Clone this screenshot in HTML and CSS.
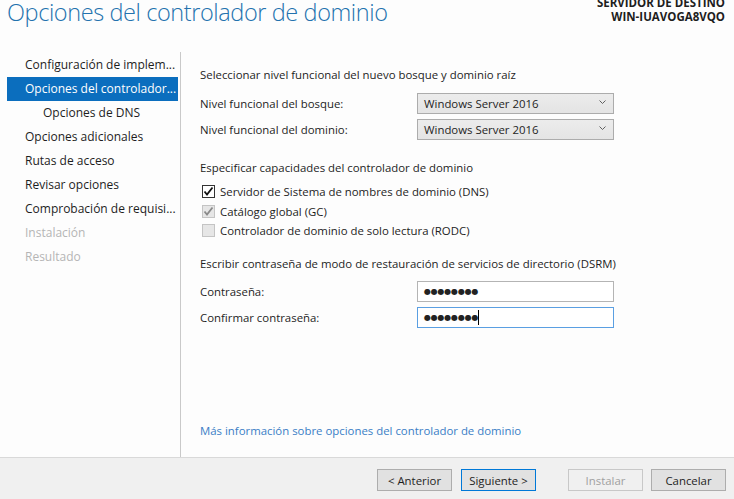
FILE: index.html
```html
<!DOCTYPE html>
<html lang="es">
<head>
<meta charset="utf-8">
<title>Opciones del controlador de dominio</title>
<link rel="stylesheet" href="styles.css">
</head>
<body>
<div class="page">
  <header class="header">
    <h1 class="title">Opciones del controlador de dominio</h1>
    <div class="server">
      <div>SERVIDOR DE DESTINO</div>
      <div>WIN-IUAVOGA8VQO</div>
    </div>
  </header>
  <div class="main">
    <nav class="sidebar">
      <ul class="steps">
        <li class="step">Configuración de implem...</li>
        <li class="step selected">Opciones del controlador...</li>
        <li class="step sub">Opciones de DNS</li>
        <li class="step">Opciones adicionales</li>
        <li class="step">Rutas de acceso</li>
        <li class="step">Revisar opciones</li>
        <li class="step">Comprobación de requisi...</li>
        <li class="step disabled">Instalación</li>
        <li class="step disabled">Resultado</li>
      </ul>
    </nav>
    <section class="content">
      <div class="heading h-first">Seleccionar nivel funcional del nuevo bosque y dominio raíz</div>
      <div class="field f-first">
        <span class="label">Nivel funcional del bosque:</span>
        <div class="select"><span>Windows Server 2016</span><svg class="chev" width="7" height="4" viewBox="0 0 7 4"><polyline points="0.5,0.5 3.5,3.5 6.5,0.5" fill="none" stroke="#606060" stroke-width="1"/></svg></div>
      </div>
      <div class="field">
        <span class="label">Nivel funcional del dominio:</span>
        <div class="select"><span>Windows Server 2016</span><svg class="chev" width="7" height="4" viewBox="0 0 7 4"><polyline points="0.5,0.5 3.5,3.5 6.5,0.5" fill="none" stroke="#606060" stroke-width="1"/></svg></div>
      </div>

      <div class="heading h-second">Especificar capacidades del controlador de dominio</div>
      <div class="checks">
        <div class="check">
          <span class="box"><svg width="11" height="11" viewBox="0 0 11 11"><polyline points="1.5,5.5 4,8.5 9.5,1.5" fill="none" stroke="#111" stroke-width="1.8"/></svg></span>
          <span>Servidor de Sistema de nombres de dominio (DNS)</span>
        </div>
        <div class="check">
          <span class="box box-disabled"><svg width="11" height="11" viewBox="0 0 11 11"><polyline points="1.5,5.5 4,8.5 9.5,1.5" fill="none" stroke="#8a8a8a" stroke-width="1.8"/></svg></span>
          <span>Catálogo global (GC)</span>
        </div>
        <div class="check">
          <span class="box box-disabled"></span>
          <span>Controlador de dominio de solo lectura (RODC)</span>
        </div>
      </div>

      <div class="heading h-third">Escribir contraseña de modo de restauración de servicios de directorio (DSRM)</div>
      <div class="field f-pass">
        <span class="label">Contraseña:</span>
        <div class="input"><span class="dots">●●●●●●●●</span></div>
      </div>
      <div class="field">
        <span class="label">Confirmar contraseña:</span>
        <div class="input focused"><span class="dots">●●●●●●●●</span><span class="caret"></span></div>
      </div>

      <a class="link" href="#">Más información sobre opciones del controlador de dominio</a>
    </section>
  </div>
  <footer class="footer">
    <button class="btn">&lt; Anterior</button>
    <button class="btn primary">Siguiente &gt;</button>
    <button class="btn off" disabled>Instalar</button>
    <button class="btn">Cancelar</button>
  </footer>
</div>
</body>
</html>
```

FILE: styles.css
```css
* { box-sizing: border-box; }
html, body { margin: 0; padding: 0; }
body {
  background: #fdfdfd;
  font-family: "Open Sans", "Noto Sans", sans-serif;
  font-size: 11.4px;
  color: #1e1e1e;
  overflow: hidden;
}
.page {
  width: 734px;
  height: 499px;
  display: flex;
  flex-direction: column;
}
.header {
  height: 52px;
  flex: none;
  display: flex;
  justify-content: space-between;
  align-items: flex-start;
  padding: 0 9px 0 7px;
  overflow: hidden;
}
.title {
  margin: -5px 0 0 0;
  font-size: 23.5px;
  font-weight: 300;
  line-height: 34px;
  color: #2372ae;
  letter-spacing: -0.4px;
}
.server {
  margin-top: -4px;
  text-align: right;
  font-weight: 700;
  font-size: 11.5px;
  line-height: 14px;
  color: #1e1e1e;
}
.main {
  flex: 1;
  display: flex;
  min-height: 0;
}
.sidebar {
  width: 181px;
  flex: none;
  border-right: 1px solid #c9c9c9;
  padding-top: 1px;
}
.steps {
  list-style: none;
  margin: 0 2px 0 7px;
  padding: 0;
}
.step {
  height: 24px;
  line-height: 24px;
  padding-left: 18px;
  white-space: nowrap;
  overflow: hidden;
  font-size: 12px;
  color: #1e1e1e;
}
.step.sub { padding-left: 36px; }
.step.selected { background: #0b6ebe; color: #fff; }
.step.disabled { color: #b5b5b5; }
.content {
  flex: 1;
  display: flex;
  flex-direction: column;
  padding: 15px 0 18px 19px;
}
.heading {
  line-height: 16px;
  height: 16px;
  white-space: nowrap;
}
.h-second { margin-top: 20px; }
.h-third { margin-top: 16px; }
.field {
  display: flex;
  align-items: center;
  height: 21px;
  margin-top: 5px;
}
.f-first { margin-top: 10px; }
.f-pass { margin-top: 9px; }
.label { width: 217px; flex: none; }
.select {
  width: 197px;
  height: 21px;
  border: 1px solid #acacac;
  background: linear-gradient(#ececec, #e4e4e4);
  display: flex;
  align-items: center;
  justify-content: space-between;
  padding: 0 7px 0 6px;
}
.chev { margin-top: -3px; }
.input {
  width: 197px;
  height: 21px;
  border: 1px solid #b4b4b4;
  background: #fff;
  display: flex;
  align-items: center;
  padding-left: 6px;
}
.input.focused { border-color: #5a9fe2; }
.dots {
  font-family: "DejaVu Sans", sans-serif;
  font-size: 8px;
  letter-spacing: -0.2px;
  color: #222;
  line-height: 1;
}
.caret {
  width: 1px;
  height: 15px;
  background: #000;
}
.checks {
  margin-top: 5px;
  display: flex;
  flex-direction: column;
}
.check {
  height: 20px;
  display: flex;
  align-items: center;
  gap: 5px;
  padding-left: 2px;
}
.check:last-child { height: 19px; }
.box {
  width: 13px;
  height: 13px;
  border: 1px solid #333;
  background: #fff;
  display: flex;
  align-items: center;
  justify-content: center;
}
.box-disabled { border-color: #c4c4c4; background: #e6e6e6; }
.link {
  margin-top: auto;
  line-height: 16px;
  color: #3a7ec6;
  text-decoration: none;
}
.footer {
  height: 42px;
  flex: none;
  background: #f0f0f0;
  border-top: 1px solid #d9d9d9;
  display: flex;
  justify-content: flex-end;
  align-items: flex-start;
  padding: 11px 8px 0 0;
}
.btn {
  width: 75px;
  height: 22px;
  border: 1px solid #adadad;
  background: #e1e1e1;
  font-family: "Open Sans", "Noto Sans", sans-serif;
  font-size: 11.4px;
  color: #1e1e1e;
  padding: 0;
  margin-left: 8px;
}
.btn.primary { border-color: #0078d7; margin-left: 9px; }
.btn.off {
  margin-left: 32px;
  background: #f0f0f0;
  border-color: #c8c8c8;
  color: #a0a0a0;
}
```
